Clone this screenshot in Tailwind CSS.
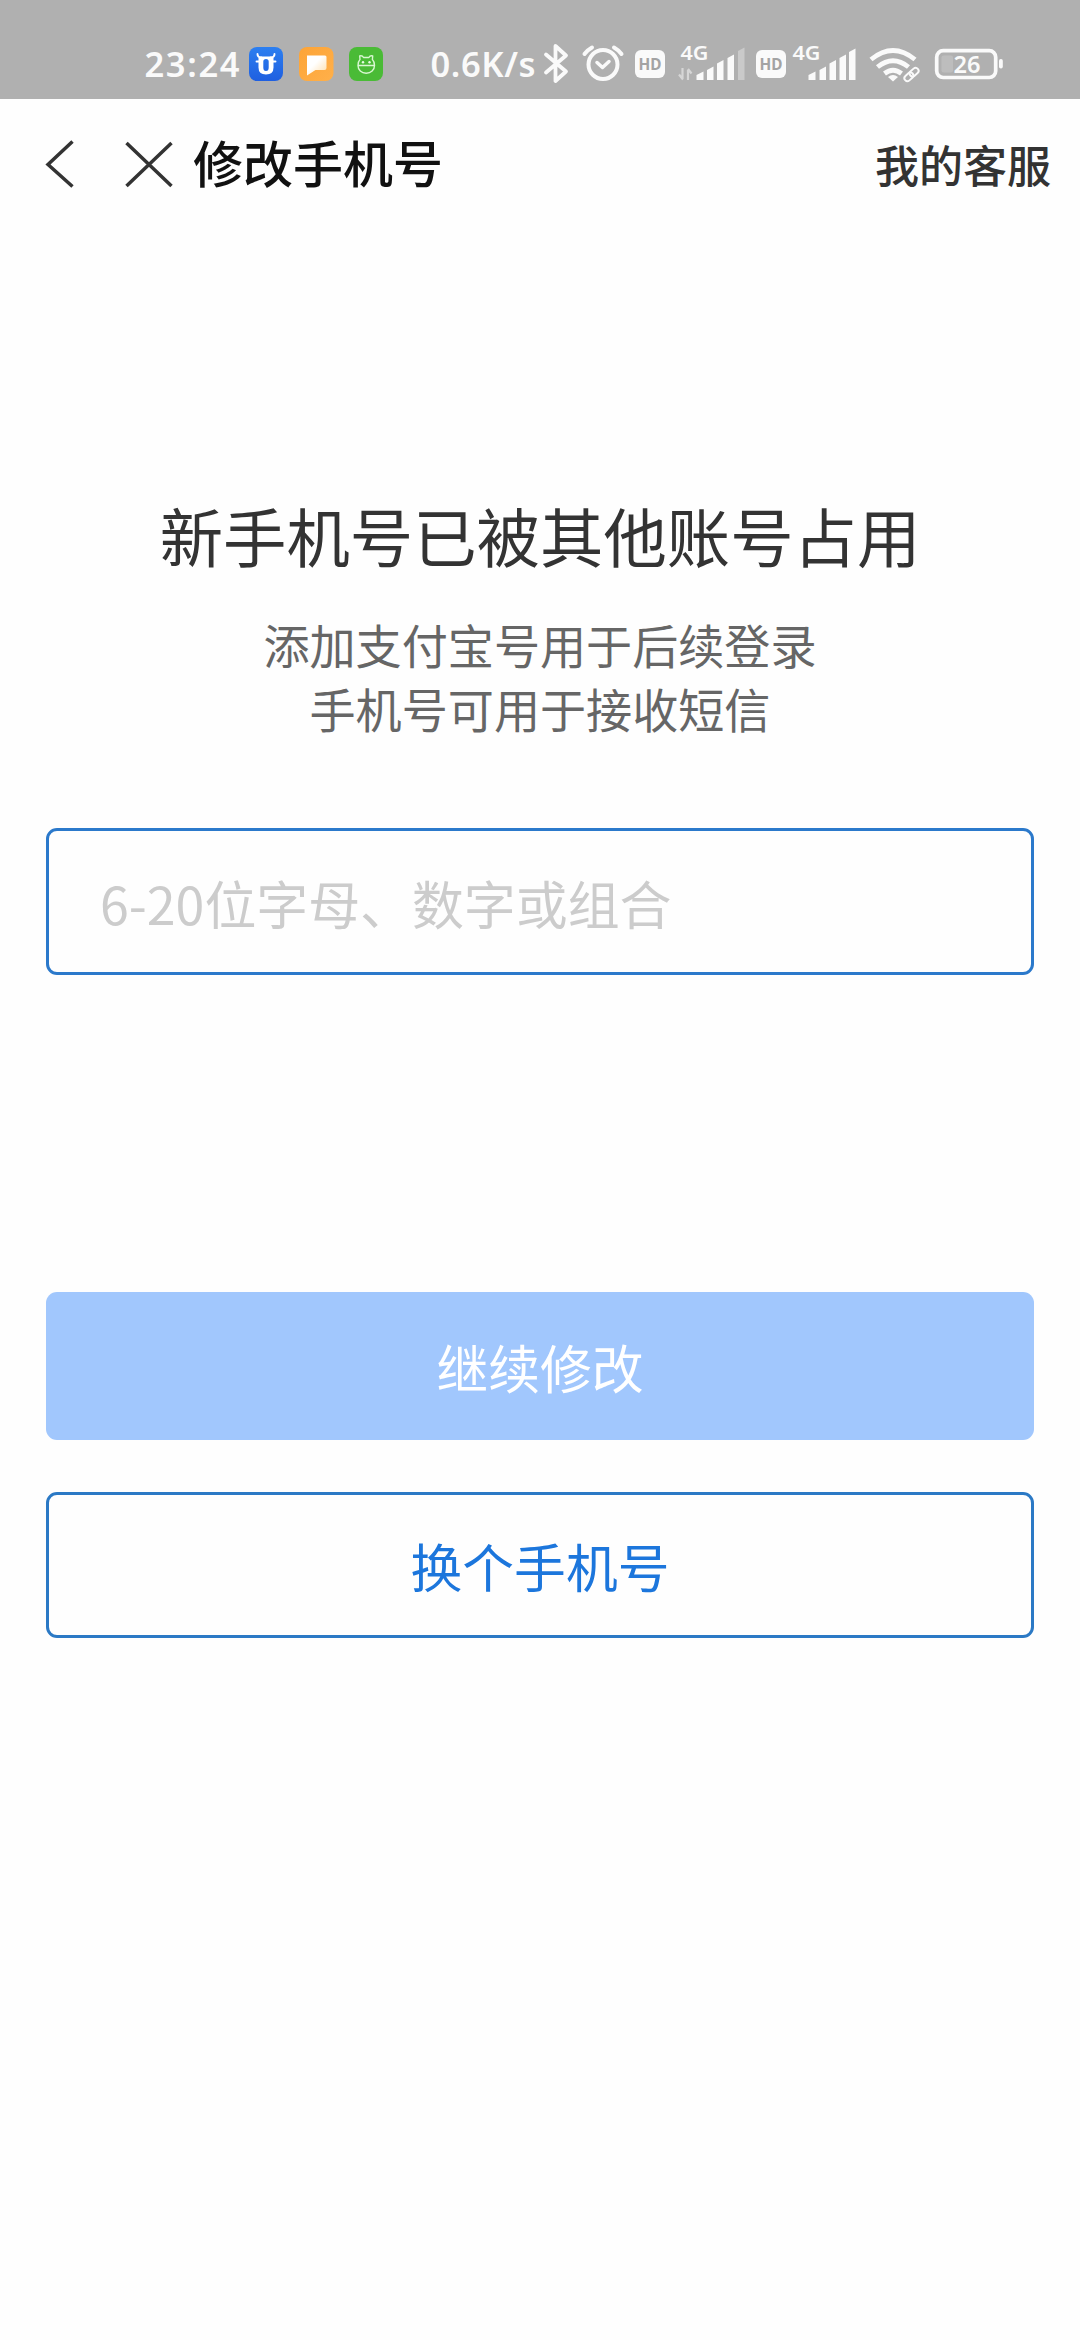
<!DOCTYPE html>
<html lang="zh-CN">
<head>
<meta charset="utf-8">
<title>修改手机号</title>
<script src="https://cdn.jsdelivr.net/npm/@tailwindcss/browser@4"></script>
</head>
<body class="w-[1080px] h-[2340px] overflow-hidden bg-[#fefefe] font-['Noto_Sans_CJK_SC',sans-serif] text-[#333333]">

<!-- Status bar -->
<header class="flex h-[99px] items-start bg-[#b0b0b0] pt-10 pl-[140px] font-['Noto_Sans',sans-serif] text-white">
  <svg class="h-[50px] w-[105px] shrink-0" viewBox="140 40 105 50" fill="#fafafa">
    <text x="144.500" y="77" font-size="34.500" font-weight="600" textLength="95" lengthAdjust="spacing">23:24</text>
  </svg>
  <!-- Notification app icons -->
  <svg class="h-[50px] w-[145px] shrink-0" viewBox="245 40 145 50">
    <defs>
      <linearGradient id="blue" x1="0" y1="0" x2="0" y2="1"><stop stop-color="#2c7ff0"/><stop offset="1" stop-color="#1f5fe0"/></linearGradient>
      <linearGradient id="orange" x1="0" y1="0" x2="1" y2="1"><stop stop-color="#fda437"/><stop offset="1" stop-color="#ffb04a"/></linearGradient>
      <linearGradient id="bubble" x1="0" y1="0" x2="1" y2="1"><stop offset="0.400" stop-color="#fff"/><stop offset="1" stop-color="#ffdda6"/></linearGradient>
    </defs>
    <rect x="249" y="47" width="34" height="34" rx="8" fill="url(#blue)"/>
    <path d="M257.500 54c0 2.500 1 3.500 4 3.500M274.500 54c0 2.500-1 3.500-4 3.500M256.500 61.500h4M271.500 61.500h4" fill="none" stroke="#fff" stroke-width="1.900" stroke-linecap="round"/>
    <path fill-rule="evenodd" d="M260 56.500h12q1.500 0 1.500 1.500v9.500q0 7-7.500 7t-7.500-7v-9.500q0-1.500 1.500-1.500zM263.300 61.500v6q0 3.500 2.700 3.500t2.700-3.500v-6q0-2.500-2.700-2.500t-2.700 2.500z" fill="#fff"/>
    <rect x="299" y="47" width="34.500" height="34" rx="8" fill="url(#orange)"/>
    <path d="M307 55.500h18q1.500 0 1.500 1.500v11q0 2-2 2h-9l-8.500 5.500z" fill="url(#bubble)"/>
    <rect x="349" y="47" width="34" height="34" rx="8" fill="#4abb36"/>
    <path d="M358 65.500h16.500c0 4.500-3.500 7.700-8.300 7.700s-8.200-3.200-8.200-7.700zM358 65.500c0-3 .5-4.500 2-6l-.3-3.500c1.800-.5 3 0 3.800 1.500h5.400c.8-1.500 2-2 3.800-1.500l-.3 3.500c1.500 1.500 2.100 3 2.100 6" fill="none" stroke="#d9f7d2" stroke-width="1.400" stroke-linejoin="round"/>
    <circle cx="363" cy="62.200" r="1.200" fill="#e9fbe5"/><circle cx="369.500" cy="62.200" r="1.200" fill="#e9fbe5"/>
  </svg>
  <svg class="ml-[35px] h-[50px] w-[115px] shrink-0" viewBox="425 40 115 50" fill="#fafafa">
    <text x="430.500" y="77" font-size="34.500" font-weight="600" textLength="105" lengthAdjust="spacing">0.6K/s</text>
  </svg>
  <!-- Bluetooth, alarm -->
  <svg class="h-[50px] w-[90px] shrink-0" viewBox="540 40 90 50" fill="none" stroke="#fafafa" stroke-width="3.800" stroke-linejoin="round" stroke-linecap="round">
    <path d="M546 54.500l20 17-10.500 9.500v-35l10.500 9.500-20 17"/>
    <circle cx="603" cy="64.500" r="14.500" stroke-width="4"/>
    <path d="M597 62.500l5.500 5 6.500-6" stroke-width="3.500"/>
    <path d="M584.500 54q3-4 7.500-6.500M621.500 54q-3-4-7.500-6.500" stroke-width="4"/>
  </svg>
  <!-- First SIM -->
  <svg class="h-[50px] w-[120px] shrink-0" viewBox="630 40 120 50" fill="#fafafa">
    <rect x="635" y="50" width="30" height="28" rx="6"/>
    <text x="638.500" y="70" font-size="16.500" font-weight="700" fill="#a3a3a3" textLength="23" lengthAdjust="spacingAndGlyphs">HD</text>
    <text x="680.500" y="60" font-size="19" font-weight="600" textLength="28" lengthAdjust="spacingAndGlyphs">4G</text>
    <path d="M682.500 68v10M679 74.500l4 5M688 80v-10M691.500 73.500l-3.500-4.500" stroke="#d6d6d6" stroke-width="2.200" fill="none"/>
    <path d="M696.500 80v-5l7-3.500v8.500zM707 80v-10l6.500-3.500v13.500zM717 80v-16.500l6.500-3.500v20zM727.500 80v-22l6.500-3.500v25.500z"/>
    <path d="M738 80v-29l6.500-3.500v32.500z" fill="#cacaca"/>
  </svg>
  <!-- Second SIM -->
  <svg class="h-[50px] w-[112px] shrink-0" viewBox="750 40 112 50" fill="#fafafa">
    <rect x="756" y="50" width="30" height="28" rx="6"/>
    <text x="759.500" y="70" font-size="16.500" font-weight="700" fill="#a3a3a3" textLength="23" lengthAdjust="spacingAndGlyphs">HD</text>
    <text x="792.500" y="60" font-size="19" font-weight="600" textLength="28" lengthAdjust="spacingAndGlyphs">4G</text>
    <path d="M808.500 80v-5l7-3.500v8.500zM819.500 80v-10l6.500-3.500v13.500zM829.500 80v-16.500l6.500-3.500v20zM839.500 80v-22l6.500-3.500v25.500zM849 80v-28l6.500-3.500v31.500z"/>
  </svg>
  <!-- Wi-Fi, battery -->
  <svg class="h-[50px] w-[150px] shrink-0" viewBox="862 40 150 50" fill="none" stroke="#fafafa">
    <path d="M871 59.500q22-18 44 0M877.500 67q15.500-12.500 31 0M884.500 73.500q8.500-6.500 17 0" stroke-width="4.800"/>
    <path d="M888 77q5-4 10 0l-5 4.500z" fill="#fafafa" stroke="none"/>
    <g stroke-width="1.900" transform="rotate(-42 911.500 74.500)"><rect x="903" y="71.500" width="10" height="6" rx="3"/><rect x="910" y="71.500" width="10" height="6" rx="3"/></g>
    <rect x="936.700" y="50.700" width="59" height="26.800" rx="6.500" stroke-width="3.700"/>
    <rect x="941.500" y="55.500" width="11.500" height="17" rx="2" fill="#bdbdbd" stroke="none"/>
    <rect x="999" y="59" width="3.800" height="9.500" rx="1.800" fill="#fafafa" stroke="none"/>
    <text x="953.500" y="72.700" font-size="23" font-weight="600" fill="#fafafa" stroke="none" textLength="27" lengthAdjust="spacingAndGlyphs">26</text>
  </svg>
</header>

<!-- Title bar -->
<nav class="flex h-[130px] items-center pl-11 pr-[29px]">
  <svg class="h-12 w-8 shrink-0" viewBox="0 0 32 48" fill="none" stroke="#333" stroke-width="3.500"><path d="M28.500 1.500L4 24.500l24.500 22"/></svg>
  <svg class="ml-[49px] h-12 w-12 shrink-0" viewBox="0 0 48 48" fill="none" stroke="#333" stroke-width="3.500"><path d="M1.500 3l45 43M46.500 3L1.500 46"/></svg>
  <h1 class="mb-1.5 ml-5 text-[50px] leading-[70px] font-medium whitespace-nowrap text-[#111111]">修改手机号</h1>
  <span class="ml-auto text-[44px] leading-[64px] font-medium whitespace-nowrap">我的客服</span>
</nav>

<main class="px-[46px] pt-[260px]">
  <h2 class="text-center text-[63.400px] leading-[90px] whitespace-nowrap">新手机号已被其他账号占用</h2>
  <p class="mt-[33px] text-center text-[46.100px] leading-[64px] text-[#666666]">添加支付宝号用于后续登录<br>手机号可用于接收短信</p>
  <div class="mt-[88px] flex h-[147px] items-center rounded-[11px] border-3 border-[#2b79cb] pt-0.5 pl-[51px] text-[51.900px] leading-[76px] text-[#cccccc]">6-20位字母、数字或组合</div>
  <div class="mt-[317px] flex h-[148px] items-center justify-center rounded-[11px] bg-[#a1c7fd] pt-0.5 text-[51.800px] leading-[76px] text-white">继续修改</div>
  <div class="mt-[52px] flex h-[146px] items-center justify-center rounded-[11px] border-3 border-[#2b79c5] pt-0.5 text-[51.800px] leading-[76px] text-[#1c76dc]">换个手机号</div>
</main>
</body>
</html>
